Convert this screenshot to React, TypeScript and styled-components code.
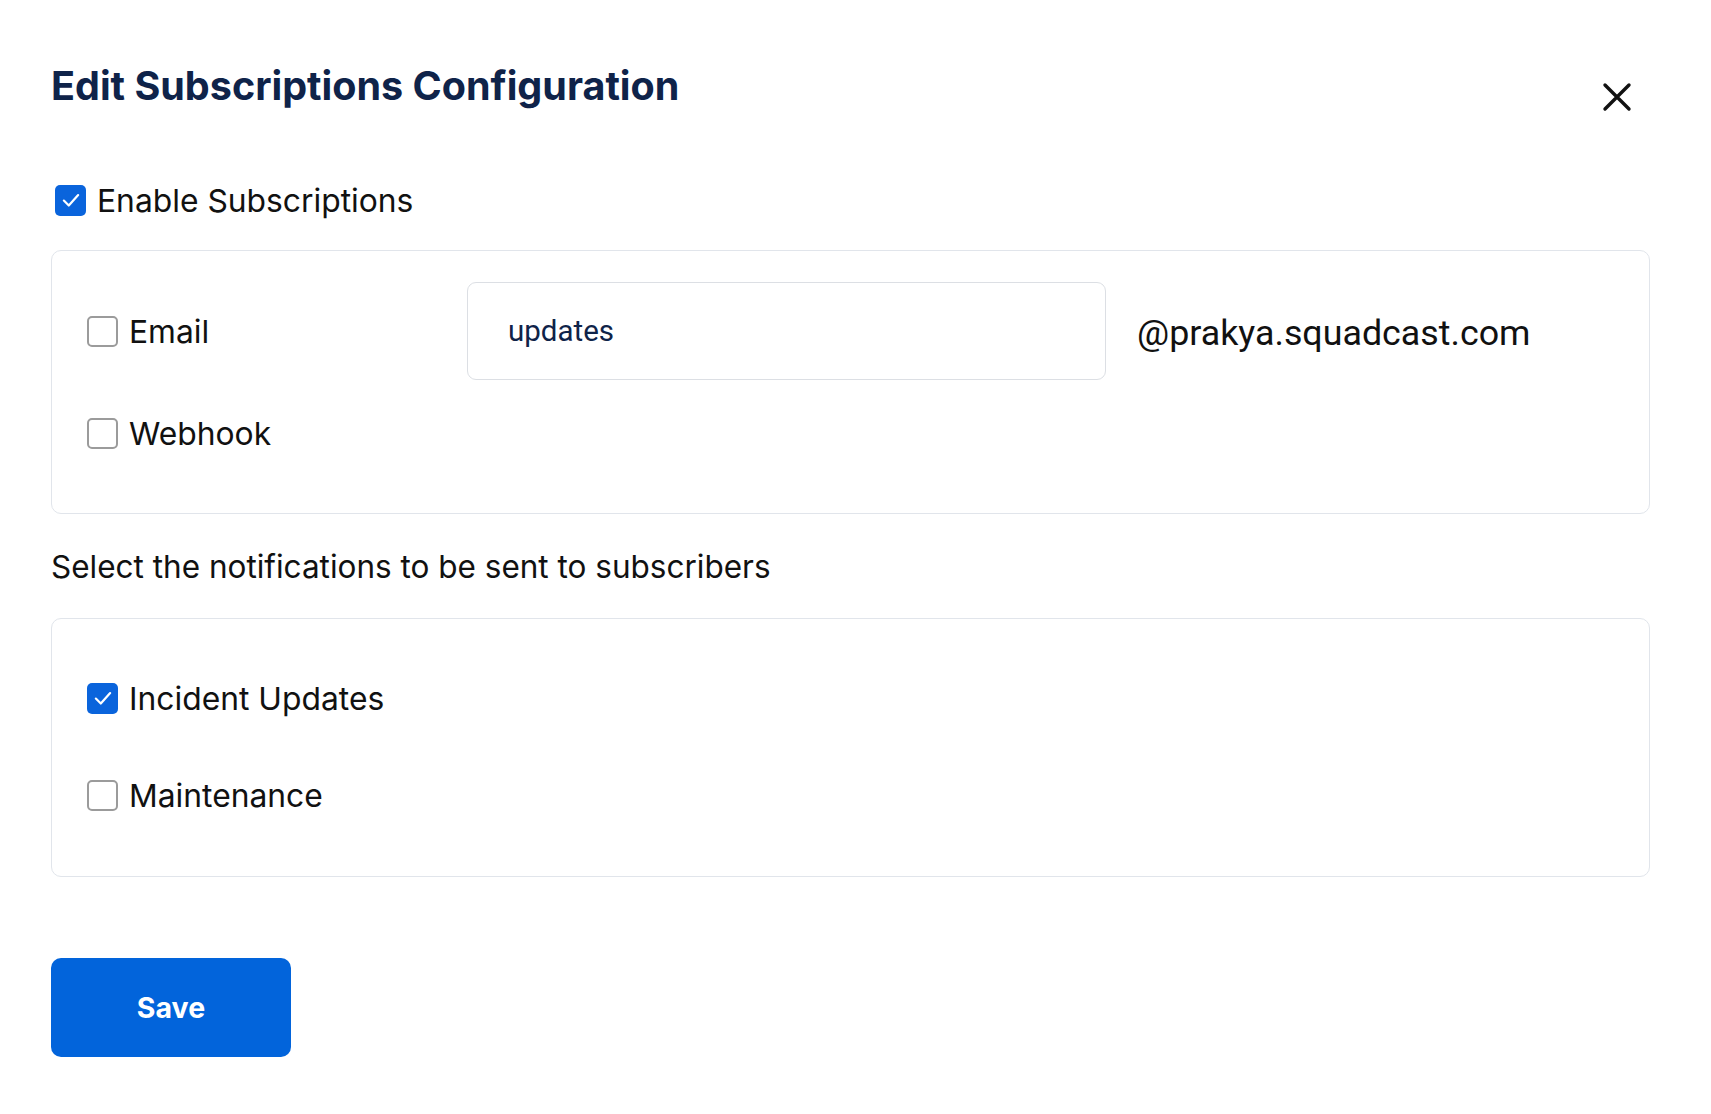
import React, { useState } from "react";
import styled, { createGlobalStyle } from "styled-components";

const GlobalStyle = createGlobalStyle`
	html, body {
		margin: 0;
		padding: 0;
		background: #ffffff;
	}
	body {
		font-family: Inter, "Noto Sans", sans-serif;
		color: #111111;
	}
`;

const Page = styled.div`
	width: 1711px;
	min-height: 1114px;
	box-sizing: border-box;
	padding: 0 61px 0 51px;
`;

const Header = styled.div`
	display: flex;
	justify-content: space-between;
	align-items: flex-start;
	height: 183px;
	padding-top: 62px;
	box-sizing: border-box;
`;

const Title = styled.h1`
	margin: 0;
	font-size: 39.5px;
	line-height: 48px;
	font-weight: 700;
	color: #0f2349;
`;

const CloseButton = styled.button`
	border: none;
	background: none;
	padding: 0;
	margin: 18px 16px 0 0;
	width: 34px;
	height: 34px;
	display: flex;
	align-items: center;
	justify-content: center;
	cursor: pointer;
`;

const CheckRow = styled.label<{ $height?: number; $indent?: number }>`
	display: flex;
	align-items: center;
	gap: 11px;
	height: ${(p) => p.$height ?? 38}px;
	padding-left: ${(p) => p.$indent ?? 0}px;
	font-size: 31.8px;
	color: #111111;
	cursor: pointer;
	user-select: none;
`;

const Box = styled.span<{ $checked: boolean }>`
	width: 31px;
	height: 31px;
	box-sizing: border-box;
	border-radius: 5px;
	flex-shrink: 0;
	display: flex;
	align-items: center;
	justify-content: center;
	background: ${(p) => (p.$checked ? "#0a64dc" : "#ffffff")};
	border: ${(p) => (p.$checked ? "none" : "2px solid #9b9b9b")};
`;

const Panel = styled.div<{ $pad: string }>`
	border: 1.5px solid #e1e5eb;
	border-radius: 10px;
	padding: ${(p) => p.$pad};
	display: flex;
	flex-direction: column;
`;

const EmailRow = styled.div`
	display: flex;
	align-items: center;
	height: 98px;
`;

const EmailLabelCol = styled.div`
	width: 380px;
	flex-shrink: 0;
`;

const Input = styled.input`
	width: 639px;
	height: 98px;
	box-sizing: border-box;
	border: 1.5px solid #dcdfe4;
	border-radius: 9px;
	padding: 0 40px;
	font-family: Roboto, "Liberation Sans", sans-serif;
	font-size: 29.5px;
	color: #0f2349;
	outline: none;
`;

const Domain = styled.span`
	margin-left: 31px;
	padding-top: 4px;
	font-family: Roboto, "Liberation Sans", sans-serif;
	font-size: 35.8px;
	color: #111111;
`;

const Spacer = styled.div<{ $h: number }>`
	height: ${(p) => p.$h}px;
	flex-shrink: 0;
`;

const SectionText = styled.p`
	margin: 0;
	height: 104px;
	display: flex;
	align-items: center;
	font-size: 31.5px;
	color: #111111;
`;

const SaveButton = styled.button`
	margin-top: 81px;
	width: 240px;
	height: 99px;
	border: none;
	border-radius: 10px;
	background: #0264db;
	color: #ffffff;
	font-family: Inter, sans-serif;
	font-size: 28.5px;
	font-weight: 700;
	cursor: pointer;
`;

const Check = () => (
	<svg width="22" height="22" viewBox="0 0 20 20" fill="none">
		<path
			d="M3.5 10.5 L8 15 L16.5 5.5"
			stroke="#ffffff"
			strokeWidth="2"
			strokeLinecap="round"
			strokeLinejoin="round"
		/>
	</svg>
);

const Checkbox: React.FC<{
	checked: boolean;
	onToggle: () => void;
	label: string;
	height?: number;
	indent?: number;
}> = ({ checked, onToggle, label, height, indent }) => (
	<CheckRow $height={height} $indent={indent} onClick={onToggle}>
		<Box $checked={checked}>{checked && <Check />}</Box>
		{label}
	</CheckRow>
);

export default function App() {
	const [enabled, setEnabled] = useState(true);
	const [email, setEmail] = useState(false);
	const [webhook, setWebhook] = useState(false);
	const [incident, setIncident] = useState(true);
	const [maintenance, setMaintenance] = useState(false);
	const [prefix, setPrefix] = useState("updates");

	return (
		<>
			<GlobalStyle />
			<Page>
				<Header>
					<Title>Edit Subscriptions Configuration</Title>
					<CloseButton aria-label="Close">
						<svg width="30" height="30" viewBox="0 0 30 30">
							<path
								d="M3 3 L27 27 M27 3 L3 27"
								stroke="#111111"
								strokeWidth="3.4"
								strokeLinecap="round"
							/>
						</svg>
					</CloseButton>
				</Header>

				<Checkbox
					checked={enabled}
					onToggle={() => setEnabled(!enabled)}
					label="Enable Subscriptions"
					height={34}
					indent={4}
				/>
				<Spacer $h={33} />

				<Panel $pad="31px 34px 61px 35px">
					<EmailRow>
						<EmailLabelCol>
							<Checkbox
								checked={email}
								onToggle={() => setEmail(!email)}
								label="Email"
							/>
						</EmailLabelCol>
						<Input value={prefix} onChange={(e) => setPrefix(e.target.value)} />
						<Domain>@prakya.squadcast.com</Domain>
					</EmailRow>
					<Spacer $h={34} />
					<Checkbox
						checked={webhook}
						onToggle={() => setWebhook(!webhook)}
						label="Webhook"
					/>
				</Panel>

				<SectionText>Select the notifications to be sent to subscribers</SectionText>

				<Panel $pad="60px 34px 62px 35px">
					<Checkbox
						checked={incident}
						onToggle={() => setIncident(!incident)}
						label="Incident Updates"
					/>
					<Spacer $h={59} />
					<Checkbox
						checked={maintenance}
						onToggle={() => setMaintenance(!maintenance)}
						label="Maintenance"
					/>
				</Panel>

				<SaveButton>Save</SaveButton>
			</Page>
		</>
	);
}
